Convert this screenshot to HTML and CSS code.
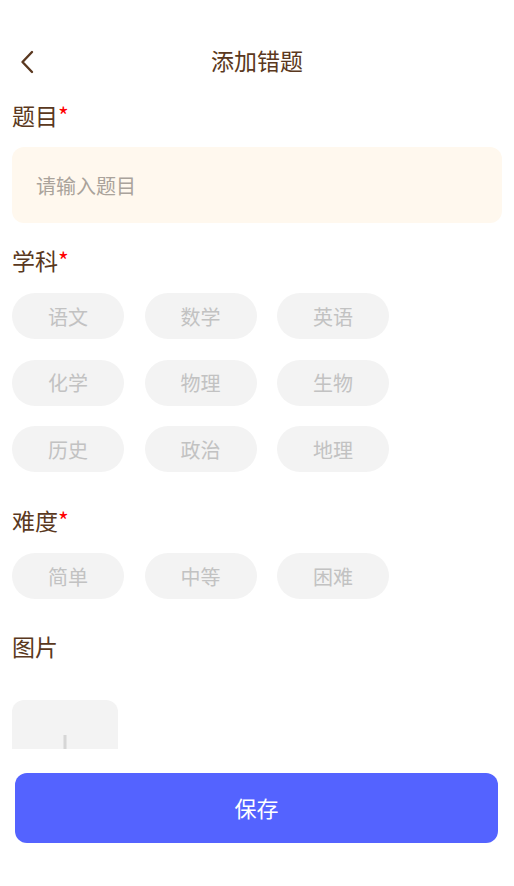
FILE: index.html
```html
<!DOCTYPE html>
<html lang="zh">
<head>
<meta charset="utf-8">
<title>添加错题</title>
<link rel="stylesheet" href="styles.css">
</head>
<body>
<div class="scroll">
  <header class="header">
    <div class="back">
      <svg width="14" height="24" viewBox="0 0 14 24"><path d="M12 2 L2.5 12 L12 22" fill="none" stroke="#5a3820" stroke-width="2.4" stroke-linecap="round" stroke-linejoin="round"/></svg>
    </div>
    <div class="title">添加错题</div>
    <div></div>
  </header>

  <div class="label label-first">题目<span class="req">*</span></div>
  <div class="input"><span class="placeholder">请输入题目</span></div>

  <div class="label label-sub">学科<span class="req">*</span></div>
  <div class="chips">
    <div class="chip">语文</div><div class="chip">数学</div><div class="chip">英语</div>
    <div class="chip">化学</div><div class="chip">物理</div><div class="chip">生物</div>
    <div class="chip">历史</div><div class="chip">政治</div><div class="chip">地理</div>
  </div>

  <div class="label label-diff">难度<span class="req">*</span></div>
  <div class="chips">
    <div class="chip">简单</div><div class="chip">中等</div><div class="chip">困难</div>
  </div>

  <div class="label label-img">图片</div>
  <div class="upload">
    <svg width="36" height="36" viewBox="0 0 36 36"><path d="M18 0 V36 M0 18 H36" stroke="#d6d6d6" stroke-width="3"/></svg>
  </div>
</div>
<footer class="footer">
  <button class="save">保存</button>
</footer>
</body>
</html>
```
FILE: styles.css
```css
* { box-sizing: border-box; }
html, body { margin: 0; padding: 0; background: #ffffff; }
body {
  font-family: "Noto Sans CJK SC", "Noto Sans", sans-serif;
  color: #5a3820;
  width: 514px;
  height: 886px;
  overflow: hidden;
}
.scroll {
  height: 749px;
  overflow: hidden;
  padding: 30px 12px 0 12px;
}
.header {
  height: 64px;
  display: grid;
  grid-template-columns: 40px 1fr 40px;
  align-items: center;
}
.back {
  display: flex;
  align-items: center;
  padding-left: 8px;
}
.back svg { display: block; }
.title {
  text-align: center;
  font-size: 23px;
  line-height: 30px;
  padding-bottom: 4px;
  color: #5a3820;
}
.label {
  font-size: 23px;
  line-height: 30px;
  color: #5a3820;
}
.req { color: #ff0000; }
.label-first { margin-top: 6px; }
.label-sub { margin-top: 22px; }
.label-diff { margin-top: 33px; }
.label-img { margin-top: 32px; }
.input {
  margin-top: 17px;
  height: 76px;
  background: #fff8ee;
  border-radius: 12px;
  display: flex;
  align-items: center;
  padding-left: 24px;
}
.placeholder {
  font-size: 20px;
  color: #aaa39b;
}
.chips {
  margin-top: 18px;
  display: grid;
  grid-template-columns: repeat(3, 112px);
  column-gap: 20.5px;
  row-gap: 20.5px;
}
.chip {
  height: 46px;
  border-radius: 23px;
  background: #f3f3f3;
  color: #c2c2c2;
  font-size: 20px;
  display: flex;
  align-items: center;
  justify-content: center;
}
.upload {
  margin-top: 39px;
  width: 106px;
  height: 106px;
  border-radius: 12px;
  background: #f3f3f3;
  display: flex;
  align-items: center;
  justify-content: center;
}
.footer {
  padding: 24px 16px 0 15px;
}
.save {
  display: block;
  width: 100%;
  height: 70px;
  border: none;
  border-radius: 12px;
  background: #5463ff;
  color: #ffffff;
  font-family: "Noto Sans CJK SC", "Noto Sans", sans-serif;
  font-size: 22px;
  padding: 0 0 2px 0;
}
```
